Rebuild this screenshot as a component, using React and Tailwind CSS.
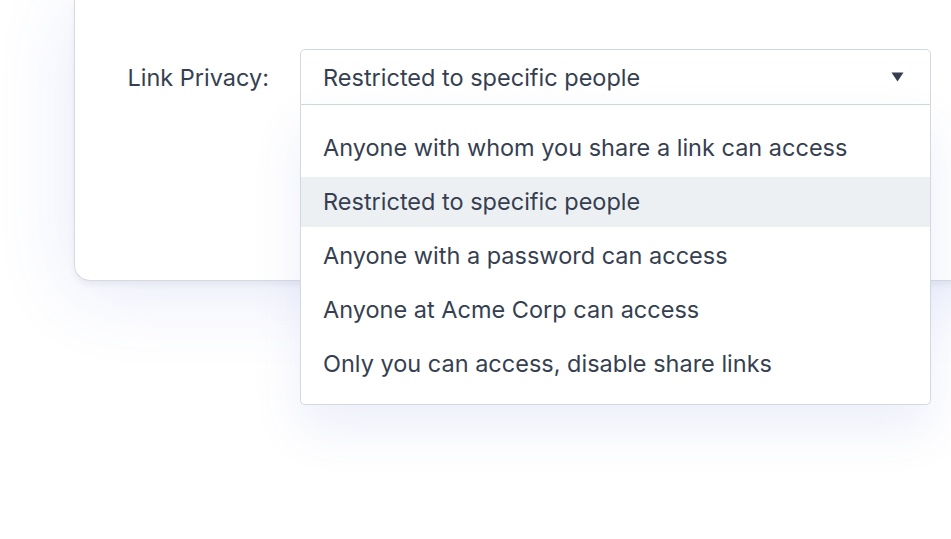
import React, { useState } from "react";

const options = [
  "Anyone with whom you share a link can access",
  "Restricted to specific people",
  "Anyone with a password can access",
  "Anyone at Acme Corp can access",
  "Only you can access, disable share links",
];

const App = () => {
  const [selected, setSelected] = useState(1);

  return (
    <div className="relative w-[951px] h-[539px] overflow-hidden bg-white font-['Inter',sans-serif] text-[#363f51]">
      {/* Card */}
      <div className="ml-[74px] w-[1000px] h-[281px] bg-white border-l border-b border-[#d6dbe2] rounded-bl-2xl shadow-[0_4px_6px_rgba(15,23,42,0.05),0_10px_80px_rgba(79,99,210,0.14)]">
        <div className="flex items-start pt-[49px]">
          <label className="w-[225px] shrink-0 pr-[31px] text-right text-[23.5px] leading-[58px]">
            Link Privacy:
          </label>

          <div className="relative w-[631px]">
            {/* Select trigger */}
            <button className="flex w-full h-[56px] items-center justify-between border border-[#d2d8df] rounded-t-[5px] bg-white pl-[22px] pr-[26px] pt-[2px] text-left text-[23.5px]">
              <span>{options[selected]}</span>
              <svg width="13" height="10" viewBox="0 0 13 10" className="fill-[#363f51] -mt-[2px]">
                <path d="M0.5 0.5 H12.5 L6.5 9.5 Z" />
              </svg>
            </button>

            {/* Menu */}
            <ul className="absolute left-0 top-full w-full flex flex-col gap-[4px] pt-[18px] pb-[15px] bg-white border border-t-0 border-[#d2d8df] rounded-b-[5px] shadow-[0_24px_50px_rgba(79,99,210,0.10)]">
              {options.map((opt, i) => (
                <li
                  key={opt}
                  onClick={() => setSelected(i)}
                  className={`h-[50px] flex items-center pl-[22px] text-[23.5px] ${
                    i === selected ? "bg-[#edf0f3]" : ""
                  }`}
                >
                  {opt}
                </li>
              ))}
            </ul>
          </div>
        </div>
      </div>
    </div>
  );
};

export default App;
